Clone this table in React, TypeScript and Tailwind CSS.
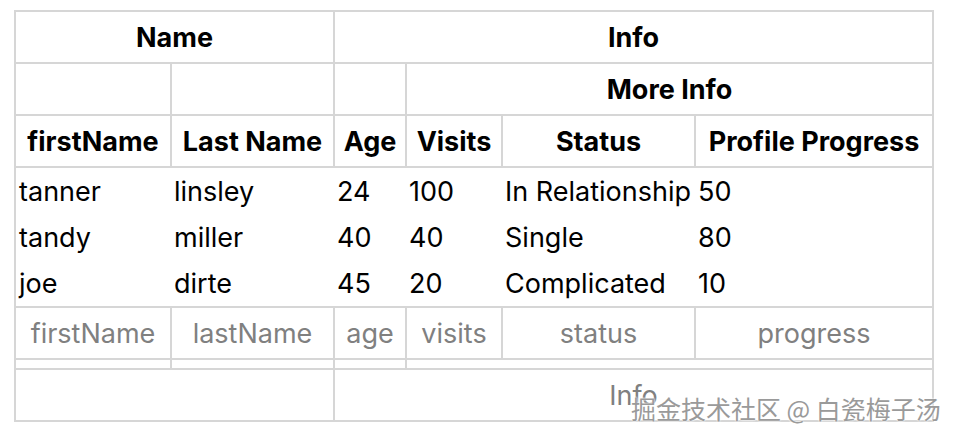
import React from "react";

type Person = {
  firstName: string;
  lastName: string;
  age: number;
  visits: number;
  status: string;
  progress: number;
};

const DATA: Person[] = [
  { firstName: "tanner", lastName: "linsley", age: 24, visits: 100, status: "In Relationship", progress: 50 },
  { firstName: "tandy", lastName: "miller", age: 40, visits: 40, status: "Single", progress: 80 },
  { firstName: "joe", lastName: "dirte", age: 45, visits: 20, status: "Complicated", progress: 10 },
];

const th = "border-2 border-[#d6d6d6] px-[8px] pt-[3px] text-center font-bold";
const ft = "border-2 border-[#d6d6d6] px-[8px] pt-[3px] text-center font-normal text-[#808080]";
const line = "border-2 border-[#d6d6d6]";

export default function App() {
  return (
    <div className="relative h-[438px] w-[956px] overflow-hidden bg-white pl-[14px] pt-[10px] font-['Inter',sans-serif] text-[27px] text-black">
      <table className="w-[918px] table-fixed border-collapse border-2 border-[#d6d6d6]">
        <colgroup>
          <col className="w-[156px]" />
          <col className="w-[163px]" />
          <col className="w-[72px]" />
          <col className="w-[96px]" />
          <col className="w-[193px]" />
          <col className="w-[238px]" />
        </colgroup>
        <thead>
          <tr className="h-[52px]">
            <th colSpan={2} className={th}>Name</th>
            <th colSpan={4} className={th}>Info</th>
          </tr>
          <tr className="h-[52px]">
            <th className={th}></th>
            <th className={th}></th>
            <th className={th}></th>
            <th colSpan={3} className={th}>More Info</th>
          </tr>
          <tr className="h-[52px]">
            <th className={th}>firstName</th>
            <th className={th}>Last Name</th>
            <th className={th}>Age</th>
            <th className={th}>Visits</th>
            <th className={th}>Status</th>
            <th className={th}>Profile Progress</th>
          </tr>
        </thead>
        <tbody className="border-b-2 border-[#d6d6d6]">
          {DATA.map((row, i) => (
            <tr key={row.firstName} className={i === 1 ? "h-[46px]" : "h-[47px]"}>
              <td className="whitespace-nowrap px-[3px] pt-[3px]">{row.firstName}</td>
              <td className="whitespace-nowrap px-[3px] pt-[3px]">{row.lastName}</td>
              <td className="whitespace-nowrap px-[3px] pt-[3px]">{row.age}</td>
              <td className="whitespace-nowrap px-[3px] pt-[3px]">{row.visits}</td>
              <td className="whitespace-nowrap px-[3px] pt-[3px]">{row.status}</td>
              <td className="whitespace-nowrap px-[3px] pt-[3px]">{row.progress}</td>
            </tr>
          ))}
        </tbody>
        <tfoot>
          <tr className="h-[52px]">
            <th className={ft}>firstName</th>
            <th className={ft}>lastName</th>
            <th className={ft}>age</th>
            <th className={ft}>visits</th>
            <th className={ft}>status</th>
            <th className={ft}>progress</th>
          </tr>
          <tr className="h-[10px]">
            <th className={line}></th>
            <th className={line}></th>
            <th className={line}></th>
            <th colSpan={3} className={line}></th>
          </tr>
          <tr className="h-[52px]">
            <th colSpan={2} className={ft}></th>
            <th colSpan={4} className={ft}>Info</th>
          </tr>
        </tfoot>
      </table>
      <div className="absolute left-[631px] top-[390px] font-['Noto_Sans_CJK_SC',sans-serif] text-[25px] text-[#9a9a9a] [text-shadow:0_0_2px_#ffffff,0_0_2px_#ffffff]">
        掘金技术社区 @ 白瓷梅子汤
      </div>
    </div>
  );
}
